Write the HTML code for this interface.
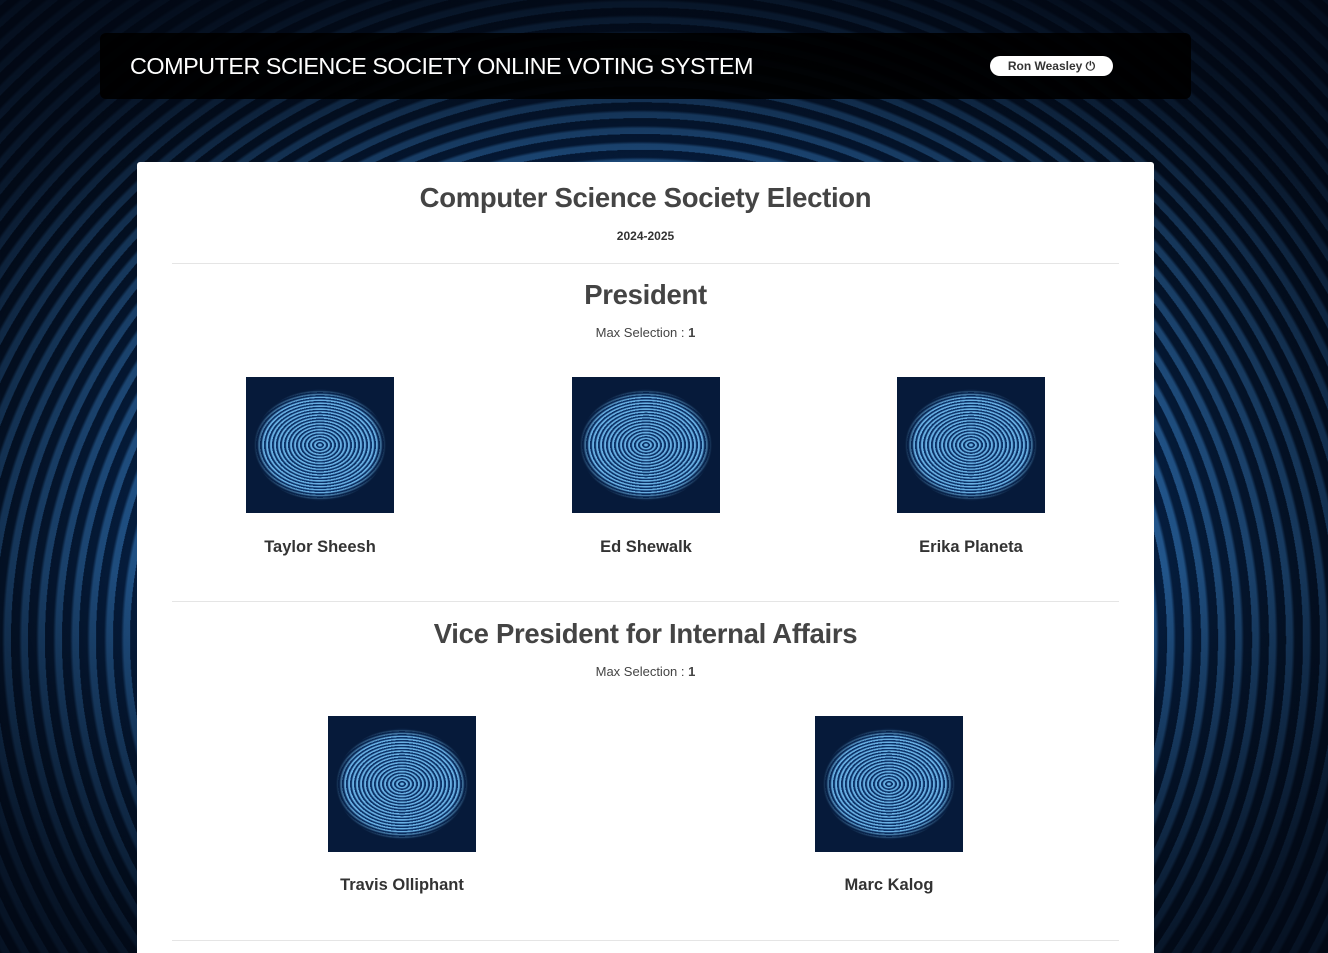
<!DOCTYPE html>
<html><head><meta charset="utf-8">
<style>
*{box-sizing:border-box;margin:0;padding:0}
html,body{width:1328px;height:953px;overflow:hidden}
body{font-family:"Liberation Sans",sans-serif;position:relative;
background:
radial-gradient(ellipse 760px 620px at 660px 520px, rgba(2,10,25,0) 55%, rgba(2,8,20,0.75) 100%),
linear-gradient(180deg, rgba(2,8,20,0.7) 0%, rgba(2,8,20,0.1) 25%, rgba(2,8,20,0) 60%, rgba(2,8,20,0.5) 100%),
repeating-radial-gradient(ellipse at 640px 640px, rgba(70,160,245,0.55) 0 6px, rgba(5,20,50,0) 9px 17px),
radial-gradient(ellipse 900px 700px at 640px 560px, #0a3a7c 0%, #072a5a 45%, #04172f 75%, #020a18 100%);}
.nav{position:absolute;left:100px;top:33px;width:1091px;height:66px;background:rgba(0,0,0,0.92);border-radius:6px}
.nav .t{position:absolute;left:30px;top:20px;color:#fff;font-size:23.4px;letter-spacing:-0.5px}
.nav .u{position:absolute;left:890px;top:23px;width:123px;height:20px;background:#fff;border-radius:10px;font-size:12px;font-weight:bold;color:#333;text-align:center;line-height:20px}
.card{position:absolute;left:137px;top:162px;width:1017px;height:800px;background:#fff;border-radius:3px}
.c{position:absolute;left:0;width:100%;text-align:center;color:#444}
h1{font-size:27.5px;font-weight:bold;color:#444;letter-spacing:-0.3px}
.hr{position:absolute;left:35px;width:947px;height:1px;background:#e5e5e5}
.ms{font-size:13px;color:#444}
.img{position:absolute;width:148px;height:136px;overflow:hidden;
background:
radial-gradient(ellipse 66px 56px at 74px 68px, transparent 85%, #061a3a 100%),
repeating-radial-gradient(ellipse 75px 55px at 74px 68px, rgba(120,200,255,0.85) 0 1.5px, rgba(20,80,160,0.45) 2.5px 4px),
#061a3a}
.nm{position:absolute;font-size:16.5px;font-weight:bold;color:#333;text-align:center;width:200px}
</style></head><body>
<div class="nav"><div class="t">COMPUTER SCIENCE SOCIETY ONLINE VOTING SYSTEM</div><div class="u">Ron Weasley ⏻</div></div>
<div class="card">
<div class="c" style="top:20px"><h1>Computer Science Society Election</h1></div>
<div class="c" style="top:67px;font-size:12px;font-weight:bold;color:#333">2024-2025</div>
<div class="hr" style="top:101px"></div>
<div class="c" style="top:117px"><h1>President</h1></div>
<div class="c ms" style="top:163px">Max Selection : <b>1</b></div>
<div class="img" style="left:109px;top:215px"></div>
<div class="img" style="left:435px;top:215px"></div>
<div class="img" style="left:760px;top:215px"></div>
<div class="nm" style="left:83px;top:376px">Taylor Sheesh</div>
<div class="nm" style="left:409px;top:376px">Ed Shewalk</div>
<div class="nm" style="left:734px;top:376px">Erika Planeta</div>
<div class="hr" style="top:439px"></div>
<div class="c" style="top:456px"><h1>Vice President for Internal Affairs</h1></div>
<div class="c ms" style="top:502px">Max Selection : <b>1</b></div>
<div class="img" style="left:191px;top:554px"></div>
<div class="img" style="left:678px;top:554px"></div>
<div class="nm" style="left:165px;top:714px">Travis Olliphant</div>
<div class="nm" style="left:652px;top:714px">Marc Kalog</div>
<div class="hr" style="top:778px"></div>
</div>
</body></html>
